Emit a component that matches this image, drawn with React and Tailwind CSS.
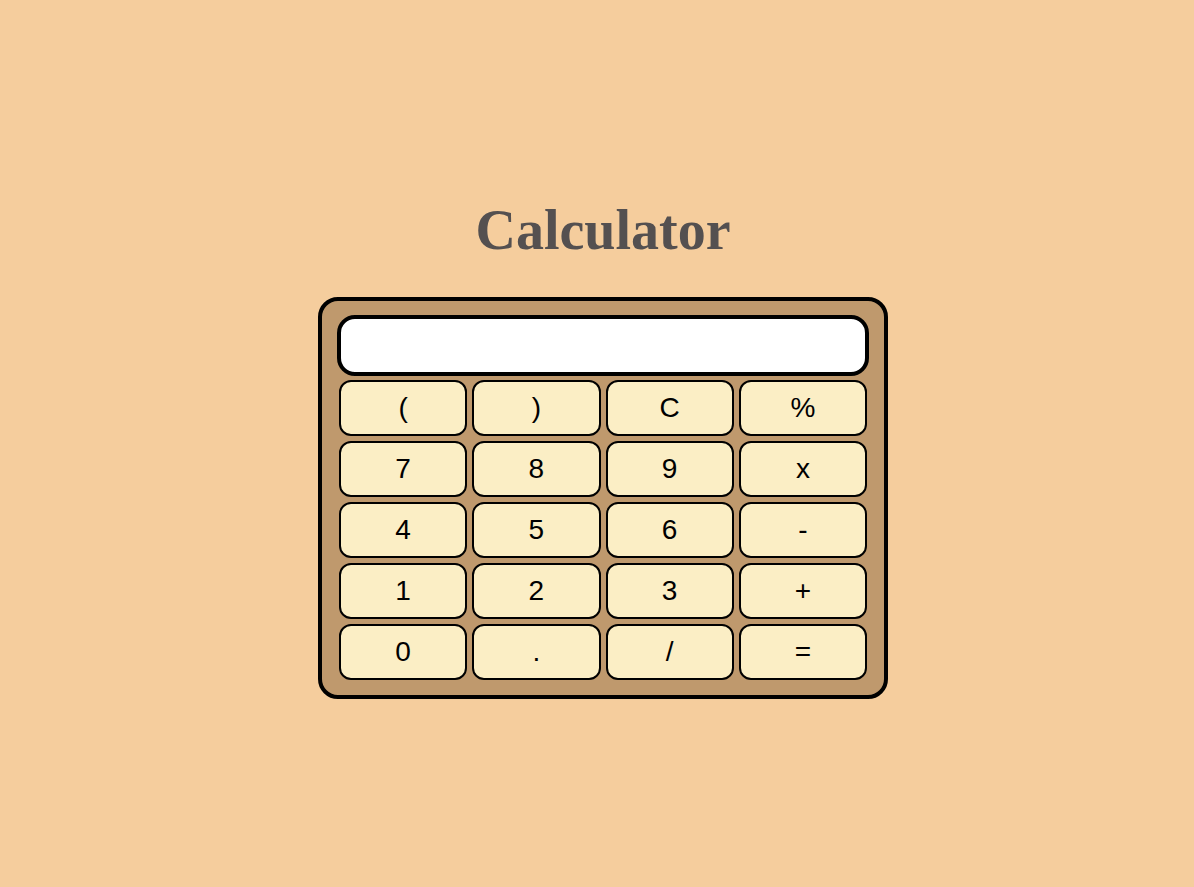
import React, { useState } from "react";

const keys = ["(", ")", "C", "%", "7", "8", "9", "x", "4", "5", "6", "-", "1", "2", "3", "+", "0", ".", "/", "="];

export default function App() {
  const [value, setValue] = useState("");

  const press = (k) => {
    if (k === "C") return setValue("");
    if (k === "=") {
      try {
        // eslint-disable-next-line no-new-func
        const res = Function(`return (${value.replace(/x/g, "*")})`)();
        setValue(String(res));
      } catch {
        setValue("Error");
      }
      return;
    }
    setValue((v) => v + k);
  };

  return (
    <div className="min-h-[887px] w-full bg-[#f5cd9d] flex flex-col items-center pl-3">
      <h1 className="mt-[202px] mb-[39px] text-[56px] leading-[56px] font-bold text-[#545050] font-['Liberation_Serif','Times_New_Roman',serif]">
        Calculator
      </h1>
      <div className="w-[570px] border-4 border-black rounded-[20px] bg-[#bf996d] px-[15px] pt-[14px] pb-[15px]">
        <input
          type="text"
          value={value}
          readOnly
          className="block w-full h-[61px] bg-white border-4 border-black rounded-[18px] px-4 text-[28px] text-right font-['Liberation_Sans',Arial,sans-serif] outline-none"
        />
        <div className="mx-[2px] mt-1 grid grid-cols-4 gap-[5px]">
          {keys.map((k) => (
            <button
              key={k}
              type="button"
              onClick={() => press(k)}
              className="h-[56px] bg-[#fbeec5] border-2 border-black rounded-[12px] text-[28px] text-black font-['Liberation_Sans',Arial,sans-serif] flex items-center justify-center"
            >
              {k}
            </button>
          ))}
        </div>
      </div>
    </div>
  );
}
